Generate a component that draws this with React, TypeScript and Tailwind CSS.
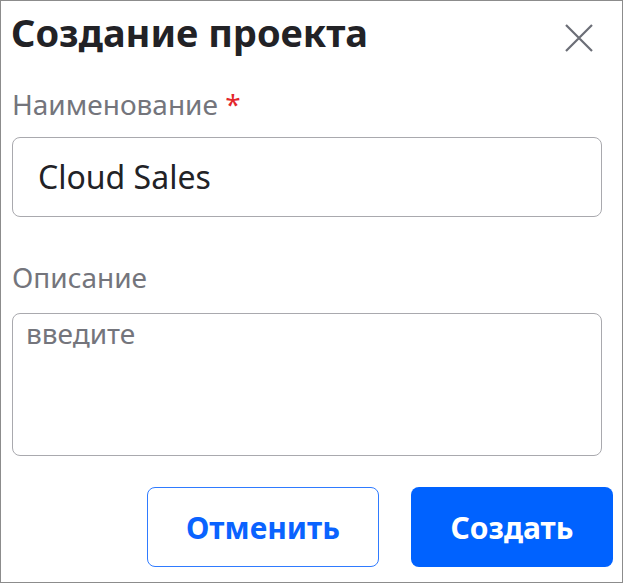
export default function App() {
  return (
    <div
      className="w-[623px] h-[583px] border border-[#8c8c8c] bg-white relative"
      style={{ fontFamily: '"Noto Sans", "Open Sans", sans-serif' }}
    >
      <div className="flex items-start justify-between pl-[10px] pr-[29px] pt-[7px]">
        <h1 className="text-[38px] leading-[48px] font-bold text-[#222226]">Создание проекта</h1>
        <button className="mt-[16px] text-[#6b6e76]" aria-label="Закрыть">
          <svg width="28" height="28" viewBox="0 0 28 28" fill="none" stroke="currentColor" strokeWidth="2.2">
            <path d="M1 1L27 27M27 1L1 27" />
          </svg>
        </button>
      </div>

      <div className="pl-[11px] pr-[20px]">
        <div className="mt-[30px] text-[28px] leading-[36px] text-[#74757c]">
          Наименование <span className="text-[#e3262b]">*</span>
        </div>
        <div className="mt-[15px] h-[80px] rounded-[8px] border border-[#a9a9ae] flex items-center pl-[25px] text-[32px] text-[#222226]">
          Cloud Sales
        </div>

        <div className="mt-[42px] text-[28px] leading-[36px] text-[#74757c]">Описание</div>
        <div className="mt-[18px] h-[143px] rounded-[8px] border border-[#a9a9ae] pl-[13px] pt-[1px] text-[28px] leading-[36px] text-[#74757c]">
          введите
        </div>
      </div>

      <div className="flex justify-end gap-[32px] pr-[9px] mt-[31px]">
        <button className="w-[232px] h-[80px] rounded-[8px] border-[1.5px] border-[#2f7bff] text-[30px] font-bold text-[#0a63ff]">
          Отменить
        </button>
        <button className="w-[202px] h-[80px] rounded-[8px] bg-[#0062ff] text-[30px] font-bold text-white">
          Создать
        </button>
      </div>
    </div>
  );
}
